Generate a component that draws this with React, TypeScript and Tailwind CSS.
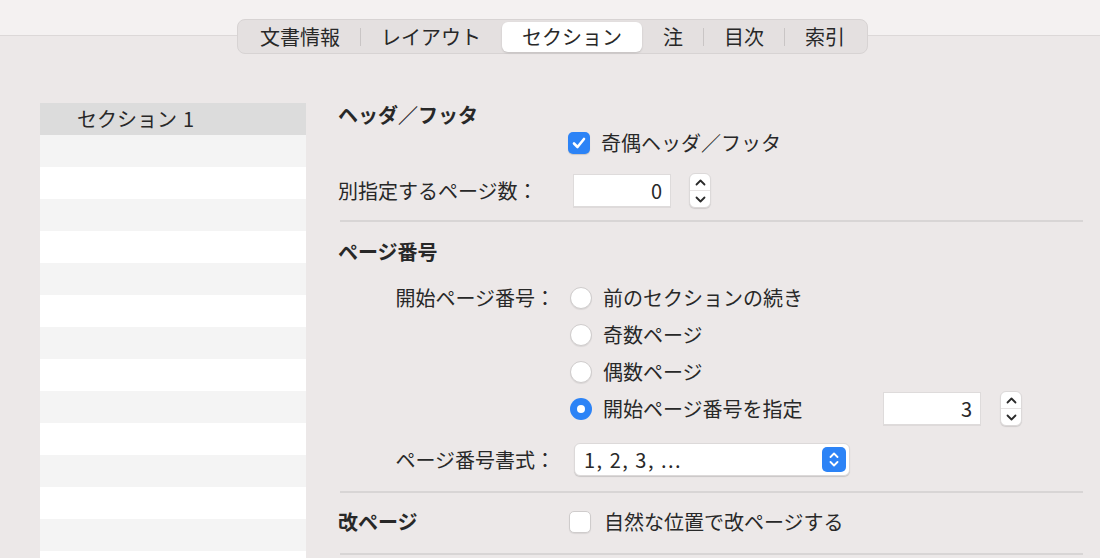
import React from "react";

const tabs = ["文書情報", "レイアウト", "セクション", "注", "目次", "索引"];
const selectedTab = 2;

function Stepper() {
  return (
    <div className="flex h-[35px] w-[22px] flex-col items-center rounded-[6px] border border-[#dcd9d9] bg-white shadow-[0_1px_1px_rgba(0,0,0,0.12)]">
      <div className="flex flex-1 items-center justify-center">
        <svg width="11" height="7" viewBox="0 0 11 7" fill="none">
          <path d="M1.5 5.5 5.5 1.5 9.5 5.5" stroke="#2a2a2a" strokeWidth="1.8" strokeLinecap="round" strokeLinejoin="round" />
        </svg>
      </div>
      <div className="h-px w-full bg-[#e6e3e3]" />
      <div className="flex flex-1 items-center justify-center">
        <svg width="11" height="7" viewBox="0 0 11 7" fill="none">
          <path d="M1.5 1.5 5.5 5.5 9.5 1.5" stroke="#2a2a2a" strokeWidth="1.8" strokeLinecap="round" strokeLinejoin="round" />
        </svg>
      </div>
    </div>
  );
}

function NumberField({ value }: { value: string }) {
  return (
    <div className="flex h-[33px] w-[98px] items-center justify-end border border-[#dedbdb] bg-white pr-[8px] text-[20px] shadow-[0_1px_0_rgba(0,0,0,0.06)]">
      {value}
    </div>
  );
}

function Checkbox({ checked }: { checked?: boolean }) {
  if (checked) {
    return (
      <div className="flex h-[22px] w-[22px] items-center justify-center rounded-[5px] bg-[#2c83f6] shadow-[0_1px_1px_rgba(0,0,0,0.15)]">
        <svg width="14" height="12" viewBox="0 0 14 12" fill="none">
          <path d="M2 6.5 5.5 10 12 2" stroke="white" strokeWidth="2.6" strokeLinecap="round" strokeLinejoin="round" />
        </svg>
      </div>
    );
  }
  return (
    <div className="h-[22px] w-[22px] rounded-[5px] border border-[#cfcccc] bg-white shadow-[0_1px_1px_rgba(0,0,0,0.08)]" />
  );
}

function Radio({ checked }: { checked?: boolean }) {
  if (checked) {
    return (
      <div className="flex h-[22px] w-[22px] items-center justify-center rounded-full bg-[#2c83f6]">
        <div className="h-[8px] w-[8px] rounded-full bg-white" />
      </div>
    );
  }
  return <div className="h-[22px] w-[22px] rounded-full border border-[#cfcccc] bg-white shadow-[0_1px_1px_rgba(0,0,0,0.08)]" />;
}

function Divider() {
  return <div className="ml-[2px] h-[2px] w-[743px] bg-[#d8d5d5]" />;
}

export default function App() {
  const radios = ["前のセクションの続き", "奇数ページ", "偶数ページ", "開始ページ番号を指定"];
  return (
    <div
      className="relative h-[558px] w-[1100px] overflow-hidden bg-[#ece8e8] text-[#282828]"
      style={{ fontFamily: '"Noto Sans CJK JP", "Noto Sans", sans-serif' }}
    >
      <div className="h-[36px] border-b border-[#dcd8d8] bg-[#f4f1f1]" />

      <div className="absolute left-0 right-0 top-[19px] flex justify-center">
        <div className="ml-[5px] flex h-[35px] items-center rounded-[8px] border border-[#d7d3d3] bg-[#e4e0e0] px-[2px]">
          {tabs.map((t, i) => (
            <React.Fragment key={t}>
              {i > 0 && (
                <div
                  className={
                    i === selectedTab || i === selectedTab + 1
                      ? "h-[18px] w-px bg-transparent"
                      : "h-[18px] w-px bg-[#c9c5c5]"
                  }
                />
              )}
              <div
                className={
                  i === selectedTab
                    ? "flex h-[30px] items-center rounded-[6px] bg-white px-[20px] text-[20px] leading-none shadow-[0_1px_2px_rgba(0,0,0,0.15)]"
                    : "flex h-[30px] items-center px-[20px] text-[20px] leading-none"
                }
              >
                {t}
              </div>
            </React.Fragment>
          ))}
        </div>
      </div>

      <div className="flex pt-[67px]">
        <div className="ml-[40px] w-[266px] shrink-0">
          <div className="flex h-[32px] items-center bg-[#dcdcdc] pl-[37px] text-[20px] leading-none">
            セクション<span className="ml-[6px]">1</span>
          </div>
          {Array.from({ length: 14 }).map((_, i) => (
            <div key={i} className={i % 2 === 0 ? "h-[32px] bg-[#f4f4f4]" : "h-[32px] bg-white"} />
          ))}
        </div>

        <div className="ml-[32px] flex w-[745px] flex-col text-[20px] leading-none">
          <div className="flex h-[24px] items-center font-bold">ヘッダ／フッタ</div>

          <div className="mt-[4px] flex h-[24px] items-center pl-[230px]">
            <Checkbox checked />
            <span className="ml-[11px]">奇偶ヘッダ／フッタ</span>
          </div>

          <div className="mt-[18px] flex h-[35px] items-center">
            <div className="w-[235px]">別指定するページ数：</div>
            <NumberField value="0" />
            <div className="ml-[18px]">
              <Stepper />
            </div>
          </div>

          <div className="mt-[12px]">
            <Divider />
          </div>

          <div className="mt-[18px] flex h-[24px] items-center font-bold">ページ番号</div>

          <div className="mt-[15px] flex">
            <div className="flex h-[37px] w-[232px] items-center justify-end pr-[15px]">開始ページ番号：</div>
            <div className="flex flex-col">
              {radios.map((r, i) => (
                <div key={r} className="flex h-[37px] items-center">
                  <Radio checked={i === 3} />
                  <span className="ml-[11px] w-[280px]">{r}</span>
                  {i === 3 && (
                    <>
                      <NumberField value="3" />
                      <div className="ml-[19px]">
                        <Stepper />
                      </div>
                    </>
                  )}
                </div>
              ))}
            </div>
          </div>

          <div className="mt-[16px] flex h-[33px] items-center">
            <div className="flex w-[236px] justify-end pr-[19px]">ページ番号書式：</div>
            <div className="flex h-[33px] w-[276px] items-center justify-between rounded-[6px] border border-[#dcd9d9] bg-white pl-[9px] pr-[3px] shadow-[0_1px_1px_rgba(0,0,0,0.15)]">
              <span className="tracking-[1.5px]">1, 2, 3, ...</span>
              <div className="flex h-[25px] w-[24px] flex-col items-center justify-center gap-[3px] rounded-[5px] bg-[#2c83f6]">
                <svg width="10" height="6" viewBox="0 0 10 6" fill="none">
                  <path d="M1.5 5 5 1.5 8.5 5" stroke="white" strokeWidth="1.8" strokeLinecap="round" strokeLinejoin="round" />
                </svg>
                <svg width="10" height="6" viewBox="0 0 10 6" fill="none">
                  <path d="M1.5 1 5 4.5 8.5 1" stroke="white" strokeWidth="1.8" strokeLinecap="round" strokeLinejoin="round" />
                </svg>
              </div>
            </div>
          </div>

          <div className="mt-[15px]">
            <Divider />
          </div>

          <div className="mt-[17px] flex h-[24px] items-center">
            <div className="w-[231px] font-bold">改ページ</div>
            <Checkbox />
            <span className="ml-[13px]">自然な位置で改ページする</span>
          </div>

          <div className="mt-[19px]">
            <Divider />
          </div>
        </div>
      </div>
    </div>
  );
}
